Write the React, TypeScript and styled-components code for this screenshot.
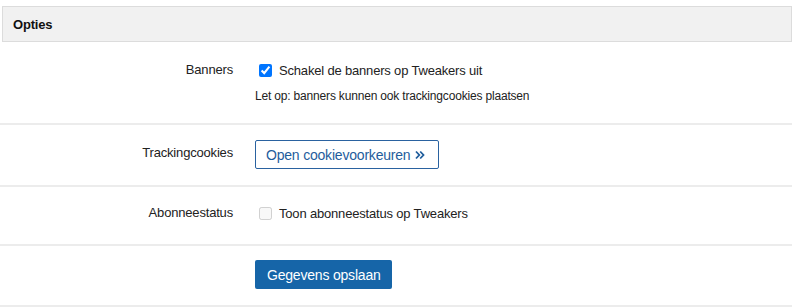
import React, { useState } from "react";
import styled, { createGlobalStyle } from "styled-components";

const GlobalStyle = createGlobalStyle`
  body {
    margin: 0;
    background: #fff;
    font-family: "Liberation Sans", Arial, sans-serif;
    color: #222;
    letter-spacing: -0.18px;
  }
`;

const Panel = styled.div`
  width: 792px;
  padding-top: 6px;
`;

const PanelHeader = styled.div`
  margin-left: 2px;
  height: 34px;
  display: flex;
  align-items: center;
  padding: 0 10px;
  background: #f1f1f1;
  border: 1px solid #dcdcdc;
  font-size: 13px;
  font-weight: bold;
  color: #111;
`;

const Row = styled.div<{ $top: number; $bottom: number }>`
  display: grid;
  grid-template-columns: 233px 1fr;
  column-gap: 22px;
  padding: ${(p) => p.$top}px 0 ${(p) => p.$bottom}px;
  border-bottom: 2px solid #ececec;
`;

const Label = styled.div<{ $offset?: number }>`
  text-align: right;
  font-size: 13px;
  line-height: 20px;
  padding-top: ${(p) => p.$offset ?? 0}px;
`;

const Field = styled.div`
  display: flex;
  flex-direction: column;
  align-items: flex-start;
`;

const CheckLine = styled.label`
  display: flex;
  align-items: center;
  height: 20px;
  font-size: 13px;
  color: #222;

  input {
    width: 13px;
    height: 13px;
    margin: 0 7px 0 4px;
  }
`;

const Note = styled.div`
  margin-top: 8px;
  font-size: 12px;
  line-height: 16px;
  color: #222;
`;

const OutlineButton = styled.button`
  display: inline-flex;
  align-items: center;
  gap: 5px;
  height: 29px;
  padding: 0 13px 0 10px;
  background: #fff;
  border: 1px solid #2a62a0;
  border-radius: 2px;
  color: #1f5d9c;
  font-family: "Liberation Sans", Arial, sans-serif;
  font-size: 14px;
  letter-spacing: -0.2px;
  cursor: pointer;
`;

const SaveButton = styled.button`
  height: 29px;
  padding: 0 11px 0 12px;
  background: #1665a8;
  border: none;
  border-radius: 2px;
  color: #fff;
  font-family: "Liberation Sans", Arial, sans-serif;
  font-size: 14px;
  letter-spacing: -0.2px;
  cursor: pointer;
`;

const Chevrons = () => (
  <svg width="10" height="10" viewBox="0 0 10 10" fill="none">
    <path d="M1 1.5L4.3 5L1 8.5" stroke="currentColor" strokeWidth="1.8" />
    <path d="M5.2 1.5L8.5 5L5.2 8.5" stroke="currentColor" strokeWidth="1.8" />
  </svg>
);

export default function App() {
  const [banners, setBanners] = useState(true);

  return (
    <Panel>
      <GlobalStyle />
      <PanelHeader>Opties</PanelHeader>

      <Row $top={18} $bottom={19}>
        <Label>Banners</Label>
        <Field>
          <CheckLine>
            <input
              type="checkbox"
              checked={banners}
              onChange={() => setBanners(!banners)}
            />
            Schakel de banners op Tweakers uit
          </CheckLine>
          <Note>Let op: banners kunnen ook trackingcookies plaatsen</Note>
        </Field>
      </Row>

      <Row $top={15} $bottom={16}>
        <Label $offset={3}>Trackingcookies</Label>
        <Field>
          <OutlineButton>
            Open cookievoorkeuren <Chevrons />
          </OutlineButton>
        </Field>
      </Row>

      <Row $top={16} $bottom={21}>
        <Label>Abonneestatus</Label>
        <Field>
          <CheckLine>
            <input type="checkbox" disabled />
            Toon abonneestatus op Tweakers
          </CheckLine>
        </Field>
      </Row>

      <Row $top={14} $bottom={16}>
        <div />
        <Field>
          <SaveButton>Gegevens opslaan</SaveButton>
        </Field>
      </Row>
    </Panel>
  );
}
